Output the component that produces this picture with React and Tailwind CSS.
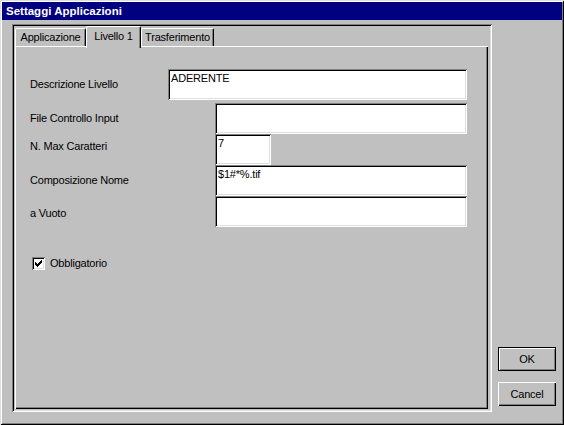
const sunken =
  'bg-white shadow-[inset_1px_1px_#808080,inset_-1px_-1px_#fff,inset_2px_2px_#000,inset_-2px_-2px_#dfdfdf]';

function Field({ value, className }) {
  return (
    <div className={`h-[31px] pt-[3px] pl-[3px] leading-[13px] ${sunken} ${className}`}>
      {value}
    </div>
  );
}

function Tab({ label, active, className }) {
  return (
    <div
      className={
        active
          ? `relative z-10 -mb-[2px] h-[22px] pb-[3px] flex items-center justify-center bg-[#c0c0c0] border-t border-l border-white border-r border-r-black rounded-t-[2px] shadow-[inset_-1px_0_#808080] ${className}`
          : `h-[18px] flex items-center justify-center border-t border-l border-white border-r border-r-black rounded-t-[2px] shadow-[inset_-1px_0_#808080] ${className}`
      }
    >
      {label}
    </div>
  );
}

function Button({ label, isDefault }) {
  return (
    <button
      className={
        isDefault
          ? 'w-[58px] h-[24px] border border-black bg-[#c0c0c0] shadow-[inset_1px_1px_#fff,inset_-1px_-1px_#808080] text-[11px]'
          : 'w-[58px] h-[24px] bg-[#c0c0c0] shadow-[inset_1px_1px_#fff,inset_-1px_-1px_#000,inset_-2px_-2px_#808080] text-[11px]'
      }
    >
      {label}
    </button>
  );
}

export default function App() {
  return (
    <div
      className="w-[564px] h-[425px] bg-[#c0c0c0] p-[2px] flex flex-col text-black text-[11px] tracking-[-0.2px] shadow-[inset_1px_1px_#dfdfdf,inset_-1px_-1px_#000,inset_2px_2px_#fff,inset_-2px_-2px_#808080]"
      style={{ fontFamily: '"Liberation Sans", Arial, sans-serif' }}
    >
      <div className="h-[18px] bg-[#000080] text-white font-bold text-[11.5px] tracking-normal pl-[4px] pt-px flex items-center">
        Settaggi Applicazioni
      </div>

      <div className="flex pl-[10px] pt-[4px]">
        {/* tab control frame */}
        <div className="w-[480px] h-[388px] p-[2px] pl-[3px] pb-[3px] flex flex-col shadow-[inset_1px_1px_#808080,inset_-1px_-1px_#fff,inset_2px_2px_#000,inset_-2px_-2px_#dfdfdf]">
          <div className="h-[20px] flex items-end">
            <Tab label="Applicazione" className="w-[71px]" />
            <Tab label="Livello 1" active className="w-[55px]" />
            <Tab label="Trasferimento" className="w-[73px]" />
          </div>
          <div className="w-[473px] flex-1 pl-[15px] pt-[23px] shadow-[inset_1px_1px_#fff,inset_-1px_-1px_#000,inset_-2px_-2px_#808080]">
            <div className="flex items-center">
              <div className="w-[138px]">Descrizione Livello</div>
              <Field value="ADERENTE" className="w-[299px]" />
            </div>
            <div className="flex items-center mt-[3px]">
              <div className="w-[185px]">File Controllo Input</div>
              <Field value="" className="w-[252px]" />
            </div>
            <div className="flex items-center">
              <div className="w-[185px] mb-[6px]">N. Max Caratteri</div>
              <Field value="7" className="w-[56px]" />
            </div>
            <div className="flex items-center">
              <div className="w-[185px]">Composizione Nome</div>
              <Field value="$1#*%.tif" className="w-[252px]" />
            </div>
            <div className="flex items-center">
              <div className="w-[185px] mt-[4px]">a Vuoto</div>
              <Field value="" className="w-[252px]" />
            </div>
            <div className="flex items-center mt-[28px] ml-[2px] gap-[5px]">
              <div className={`w-[13px] h-[13px] p-[3px] ${sunken}`}>
                <svg width="7" height="7" viewBox="0 0 7 7" shapeRendering="crispEdges">
                  <path
                    d="M6 0h1v1h-1zM5 1h2v1h-2zM0 2h1v1h-1zM4 2h3v1h-3zM0 3h2v1h-2zM3 3h3v1h-3zM0 4h5v1h-5zM1 5h3v1h-3zM2 6h1v1h-1z"
                    fill="#000"
                  />
                </svg>
              </div>
              <span>Obbligatorio</span>
            </div>
          </div>
        </div>

        {/* dialog buttons */}
        <div className="ml-[6px] pb-[6px] flex flex-col justify-end gap-[11px]">
          <Button label="OK" isDefault />
          <Button label="Cancel" />
        </div>
      </div>
    </div>
  );
}
